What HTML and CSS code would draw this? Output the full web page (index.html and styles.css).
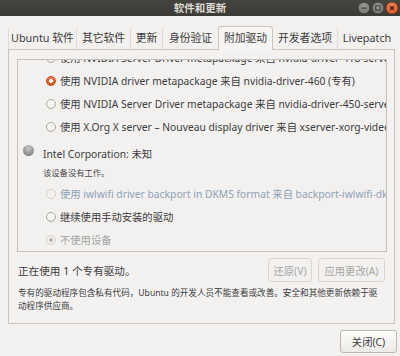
FILE: index.html
```html
<!DOCTYPE html>
<html lang="zh-CN">
<head>
<meta charset="utf-8">
<title>软件和更新</title>
<link rel="stylesheet" href="styles.css">
</head>
<body>
<div class="window">
  <header class="titlebar">
    <div class="tb-spacer"></div>
    <div class="tb-title">软件和更新</div>
    <div class="tb-buttons">
      <span class="wbtn wbtn-min"><svg width="12" height="12" viewBox="0 0 12 12"><rect x="3.5" y="5.5" width="5" height="1.2" fill="#3a3935"/></svg></span>
      <span class="wbtn wbtn-max"><svg width="12" height="12" viewBox="0 0 12 12"><rect x="3.8" y="3.8" width="4.4" height="4.4" fill="none" stroke="#3a3935" stroke-width="1"/></svg></span>
      <span class="wbtn wbtn-close"><svg width="12" height="12" viewBox="0 0 12 12"><path d="M4 4 L8 8 M8 4 L4 8" stroke="#3b1a0c" stroke-width="1.3"/></svg></span>
    </div>
  </header>

  <nav class="tabs">
    <div class="tab t1">Ubuntu 软件</div>
    <div class="tab t2">其它软件</div>
    <div class="tab t3">更新</div>
    <div class="tab t4">身份验证</div>
    <div class="tab t5 active">附加驱动</div>
    <div class="tab t6">开发者选项</div>
    <div class="tab t7">Livepatch</div>
  </nav>

  <section class="pane">
    <div class="scroller">
      <div class="list">
        <div class="row"><span class="radio"></span><span class="label">使用 NVIDIA Server Driver metapackage 来自 nvidia-driver-418-server</span></div>
        <div class="row"><span class="radio checked"></span><span class="label">使用 NVIDIA driver metapackage 来自 nvidia-driver-460 (专有)</span></div>
        <div class="row"><span class="radio"></span><span class="label">使用 NVIDIA Server Driver metapackage 来自 nvidia-driver-450-server</span></div>
        <div class="row"><span class="radio"></span><span class="label">使用 X.Org X server – Nouveau display driver 来自 xserver-xorg-video-nouveau (开源)</span></div>

        <div class="vendor"><span class="sphere"></span><span class="vendor-name">Intel Corporation: 未知</span></div>
        <div class="vendor-note">该设备没有工作。</div>

        <div class="row"><span class="radio disabled"></span><span class="label insens-blue">使用 iwlwifi driver backport in DKMS format 来自 backport-iwlwifi-dkms (开源)</span></div>
        <div class="row"><span class="radio"></span><span class="label">继续使用手动安装的驱动</span></div>
        <div class="row"><span class="radio disabled checked-dis"></span><span class="label insens">不使用设备</span></div>
      </div>
    </div>

    <div class="status">
      <span class="status-text">正在使用 1 个专有驱动。</span>
      <div class="status-buttons">
        <button class="btn btn-dis b-revert">还原(V)</button>
        <button class="btn btn-dis b-apply">应用更改(A)</button>
      </div>
    </div>
    <p class="note">专有的驱动程序包含私有代码，Ubuntu 的开发人员不能查看或改善。安全和其他更新依赖于驱<br>动程序供应商。</p>
  </section>

  <footer class="footer">
    <button class="btn btn-close">关闭(C)</button>
  </footer>
</div>
</body>
</html>
```

FILE: styles.css
```css
* { box-sizing: border-box; }
html, body { margin: 0; padding: 0; }
body {
  width: 400px;
  height: 356px;
  overflow: hidden;
  background: #f2f1f0;
  font-family: "Noto Sans", "Noto Sans CJK SC", sans-serif;
  color: #3c3c3c;
}
.window { width: 400px; height: 356px; }

/* title bar */
.titlebar {
  height: 16px;
  display: grid;
  grid-template-columns: 1fr auto 1fr;
  align-items: center;
  background: linear-gradient(#45443f, #3b3a36);
}
.tb-title {
  font-size: 10.5px;
  font-weight: bold;
  color: #dfdbd2;
  line-height: 16px;
}
.tb-buttons {
  justify-self: end;
  display: flex;
  gap: 2px;
  padding-right: 2px;
}
.wbtn {
  width: 12px; height: 12px;
  border-radius: 50%;
  display: block;
}
.wbtn svg { display: block; }
.wbtn-min, .wbtn-max {
  background: radial-gradient(circle at 50% 35%, #9a9892, #6d6b66);
  box-shadow: inset 0 0 0 0.5px #2e2d2a;
}
.wbtn-close {
  background: radial-gradient(circle at 50% 35%, #f68a5c, #df4b1e);
  box-shadow: inset 0 0 0 0.5px #8d2e10;
}

/* tabs */
.tabs {
  display: flex;
  margin: 10px 0 0 8px;
  height: 24px;
  align-items: flex-end;
  position: relative;
  z-index: 1;
}
.tab {
  height: 21px;
  font-size: 10.8px;
  line-height: 20px;
  text-align: center;
  color: #3c3c3c;
  border-right: 1px solid #dedbd7;
  white-space: nowrap;
  margin-bottom: 1px;
}
.t1 { width: 69px; border-left: 1px solid #dedbd7; }
.t2 { width: 54px; }
.t3 { width: 32px; }
.t4 { width: 55px; border-right: none; }
.t5 { width: 55px; }
.t6 { width: 65px; }
.t7 { width: 58px; border-right: none; }
.tab.active {
  height: 24px;
  margin-bottom: 0;
  line-height: 22px;
  background: #f6f5f4;
  border: 1px solid #c9c5bf;
  border-bottom: none;
  border-radius: 3px 3px 0 0;
}

/* pane */
.pane {
  margin: -1px 5px 0 8px;
  height: 275px;
  border: 1px solid #c9c5bf;
  background: #f3f2f1;
  padding: 9px 7px 0 8px;
  display: flex;
  flex-direction: column;
}
.scroller {
  height: 193px;
  border: 1px solid #c4c0ba;
  overflow: hidden;
  background: #f2f1f0;
}
.list { margin-top: -14px; }
.row {
  height: 23px;
  display: flex;
  align-items: center;
  padding-left: 28px;
  white-space: nowrap;
}
.label {
  font-size: 10.3px;
  margin-left: 4px;
  color: #3c3c3c;
}
.label.insens-blue { color: #8fa2b6; }
.label.insens { color: #a3a3a1; }
.radio {
  flex: none;
  width: 10px; height: 10px;
  border-radius: 50%;
  border: 1px solid #aaa6a0;
  background: linear-gradient(#ffffff, #efeeec);
}
.radio.checked {
  border-color: #c2461c;
  background: radial-gradient(circle, #ffffff 0 1.6px, transparent 2.1px), linear-gradient(#f27e4f, #dd5322);
}
.radio.disabled {
  border-color: #d3d0cb;
  background: #f2f1f0;
}
.radio.checked-dis {
  background: radial-gradient(circle, #b5b3af 0 1.5px, transparent 2px), #f2f1f0;
}

.vendor {
  display: flex;
  align-items: flex-start;
  margin-top: 7px;
  padding-left: 5px;
  height: 18px;
}
.sphere {
  flex: none;
  width: 11px; height: 11px;
  border-radius: 50%;
  background: radial-gradient(circle at 50% 30%, #c9c9c9, #8a8a8a 70%, #6f6f6f);
}
.vendor-name {
  margin-left: 9px;
  font-size: 10.3px;
  line-height: 18px;
}
.vendor-note {
  margin-top: 3px;
  padding-left: 25px;
  font-size: 8.3px;
  line-height: 14px;
  color: #4a4a4a;
  margin-bottom: 2px;
}

/* status */
.status {
  margin-top: 6px;
  display: flex;
  align-items: center;
  justify-content: space-between;
  height: 24px;
  padding-left: 1px;
  padding-right: 2px;
}
.status-text { font-size: 10.6px; }
.status-buttons { display: flex; gap: 6px; }
.btn {
  font-family: "Noto Sans", "Noto Sans CJK SC", sans-serif;
  font-size: 10.3px;
  height: 24px;
  padding: 0;
  border-radius: 3px;
  text-align: center;
}
.btn-dis {
  color: #a8a6a3;
  background: #f2f1f0;
  border: 1px solid #d9d6d2;
}
.b-revert { width: 44px; }
.b-apply { width: 67px; }
.note {
  margin: 5px 0 0 0;
  padding-left: 1px;
  font-size: 8.6px;
  line-height: 13px;
  color: #3c3c3c;
}

.footer {
  display: flex;
  justify-content: flex-end;
  margin-top: 6px;
  padding-right: 3px;
}
.btn-close {
  width: 57px;
  height: 23px;
  color: #3c3c3c;
  border: 1px solid #bdb8b2;
  background: linear-gradient(#fbfbfa, #edebe9);
}
```
